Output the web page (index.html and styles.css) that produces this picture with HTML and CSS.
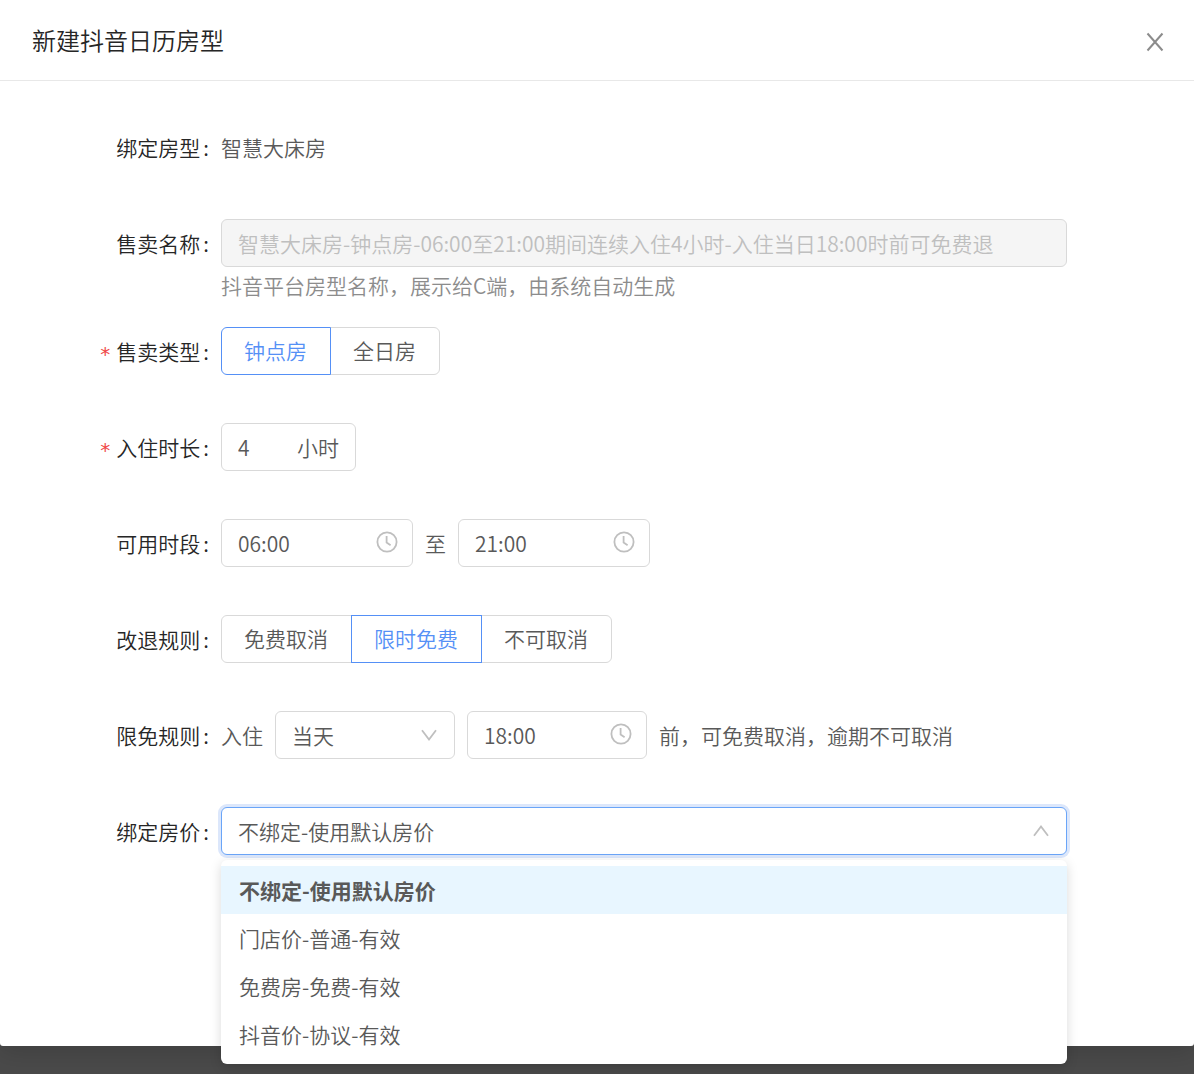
FILE: index.html
```html
<!DOCTYPE html>
<html lang="zh-CN">
<head>
    <meta charset="UTF-8">
    <meta name="viewport" content="width=device-width, initial-scale=1.0">
    <title>新建抖音日历房型</title>
    <link rel="stylesheet" href="styles.css">
</head>
<body>
    <svg class="sprite" width="0" height="0" aria-hidden="true">
        <symbol id="clock" viewBox="0 0 22 22">
            <circle cx="11" cy="11" r="9.6" />
            <path d="M10.6 5v6.6l4 2.6" />
        </symbol>
        <symbol id="down" viewBox="0 0 18 18">
            <path d="M2 4.2l7 9.3 7-9.3" />
        </symbol>
        <symbol id="up" viewBox="0 0 18 18">
            <path d="M2 13.8l7-9.3 7 9.3" />
        </symbol>
    </svg>

    <main class="modal">
        <header class="modal-header">
            <h1>新建抖音日历房型</h1>
            <button type="button" class="close" aria-label="关闭">
                <svg viewBox="0 0 18 20"><path d="M1.5 1.5l15 17M16.5 1.5l-15 17" /></svg>
            </button>
        </header>

        <form class="form">
            <div class="row">
                <span class="label">绑定房型</span>
                <div class="field">智慧大床房</div>
            </div>

            <div class="row has-help">
                <label class="label" for="name">售卖名称</label>
                <div class="field">
                    <input class="box" id="name" type="text" value="智慧大床房-钟点房-06:00至21:00期间连续入住4小时-入住当日18:00时前可免费退" disabled>
                </div>
                <p class="help">抖音平台房型名称，展示给C端，由系统自动生成</p>
            </div>

            <div class="row">
                <span class="label required" id="type-label">售卖类型</span>
                <div class="field">
                    <div class="radios" role="radiogroup" aria-labelledby="type-label">
                        <label><input type="radio" name="type" checked>钟点房</label>
                        <label><input type="radio" name="type">全日房</label>
                    </div>
                </div>
            </div>

            <div class="row">
                <label class="label required" for="hours">入住时长</label>
                <div class="field">
                    <div class="box hours">
                        <input id="hours" type="text" value="4">
                        <span>小时</span>
                    </div>
                </div>
            </div>

            <div class="row">
                <label class="label" for="start">可用时段</label>
                <div class="field">
                    <div class="box time">
                        <input id="start" type="text" value="06:00">
                        <svg class="clock"><use href="#clock" /></svg>
                    </div>
                    <span>至</span>
                    <div class="box time">
                        <input type="text" value="21:00" aria-label="结束时间">
                        <svg class="clock"><use href="#clock" /></svg>
                    </div>
                </div>
            </div>

            <div class="row">
                <span class="label" id="rule-label">改退规则</span>
                <div class="field">
                    <div class="radios" role="radiogroup" aria-labelledby="rule-label">
                        <label><input type="radio" name="rule">免费取消</label>
                        <label><input type="radio" name="rule" checked>限时免费</label>
                        <label><input type="radio" name="rule">不可取消</label>
                    </div>
                </div>
            </div>

            <div class="row">
                <label class="label" for="day">限免规则</label>
                <div class="field">
                    <span>入住</span>
                    <div class="select day">
                        <select class="box" id="day">
                            <option>当天</option>
                        </select>
                        <svg class="arrow"><use href="#down" /></svg>
                    </div>
                    <div class="box time short">
                        <input type="text" value="18:00" aria-label="截止时间">
                        <svg class="clock"><use href="#clock" /></svg>
                    </div>
                    <span>前，可免费取消，逾期不可取消</span>
                </div>
            </div>

            <div class="row">
                <label class="label" for="price">绑定房价</label>
                <div class="field">
                    <div class="select open">
                        <select class="box" id="price">
                            <option>不绑定-使用默认房价</option>
                            <option>门店价-普通-有效</option>
                            <option>免费房-免费-有效</option>
                            <option>抖音价-协议-有效</option>
                        </select>
                        <svg class="arrow"><use href="#up" /></svg>
                        <ul class="menu" role="listbox" aria-label="绑定房价">
                            <li role="option" aria-selected="true">不绑定-使用默认房价</li>
                            <li role="option">门店价-普通-有效</li>
                            <li role="option">免费房-免费-有效</li>
                            <li role="option">抖音价-协议-有效</li>
                        </ul>
                    </div>
                </div>
            </div>
        </form>
    </main>
</body>
</html>
```

FILE: styles.css
```css
* {
    box-sizing: border-box;
}
body {
    margin: 0;
    min-height: 100vh;
    background: #4a4a4a;
    color: #595959;
    font-family: "Noto Sans CJK SC", sans-serif;
    font-size: 21px;
    font-weight: 350;
    line-height: 32px;
}
input, select, button {
    font: inherit;
    color: inherit;
}
svg {
    fill: none;
    stroke: #bfbfbf;
    stroke-width: 1.8;
}
.sprite {
    position: absolute;
}
.modal {
    background: #fff;
    border-radius: 0 0 3px 3px;
    box-shadow: 0 6px 24px rgba(0, 0, 0, 0.15);
}
.modal-header {
    display: flex;
    align-items: center;
    justify-content: space-between;
    height: 81px;
    padding: 0 30px 0 32px;
    border-bottom: 1px solid #e8e8e8;
}
h1 {
    margin: 0;
    color: #262626;
    font-size: 24px;
    font-weight: 350;
}
.close {
    display: flex;
    padding: 4px 0 0;
    border: 0;
    background: none;
    cursor: pointer;
}
.close svg {
    width: 18px;
    height: 20px;
    stroke: #8c8c8c;
    stroke-width: 2;
}

/* form rows */
.form {
    padding: 42px 127px 191px 0;
}
.row {
    display: grid;
    grid-template-columns: 221px minmax(0, 1fr);
    align-items: center;
    margin-bottom: 48px;
}
.row:last-child {
    margin-bottom: 0;
}
.has-help {
    margin-bottom: 21px;
}
.label {
    display: flex;
    align-items: center;
    justify-content: flex-end;
    padding-right: 12px;
    color: #262626;
}
.label::after {
    content: ":";
    margin-left: 3px;
}
.required::before {
    content: "*";
    margin-right: 5px;
    color: #f04848;
    font-family: "DejaVu Sans Mono", monospace;
    font-size: 20px;
    line-height: 24px;
    padding-top: 6px;
}
.field {
    display: flex;
    align-items: center;
    gap: 12px;
    height: 48px;
}
.help {
    grid-column: 2;
    margin: 0;
    padding-top: 2px;
    height: 39px;
    color: #8c8c8c;
}

/* inputs */
.box {
    width: 100%;
    height: 48px;
    padding: 0 16px;
    border: 1px solid #d9d9d9;
    border-radius: 6px;
    background: #fff;
}
.box:disabled {
    background: #f5f5f5;
    color: #bfbfbf;
    opacity: 1;
}
.hours, .time {
    display: flex;
    align-items: center;
    justify-content: space-between;
    width: 192px;
}
.time {
    padding-right: 14px;
}
.hours {
    width: 135px;
}
.short {
    width: 180px;
}
.box input {
    flex: 1;
    min-width: 0;
    padding: 0;
    border: 0;
    outline: 0;
    background: none;
}
.clock {
    width: 22px;
    height: 22px;
    margin-bottom: 2px;
}

/* radio buttons */
.radios {
    display: flex;
}
.radios label {
    position: relative;
    height: 48px;
    padding: 6px 23px 8px 22px;
    border: 1px solid #d9d9d9;
    cursor: pointer;
}
.radios label + label {
    margin-left: -1px;
}
.radios label:first-child {
    border-radius: 6px 0 0 6px;
}
.radios label:last-child {
    border-radius: 0 6px 6px 0;
}
.radios input {
    position: absolute;
    margin: 0;
    opacity: 0;
}
.radios label:has(:checked) {
    z-index: 1;
    border-color: #5590f6;
    color: #5590f6;
}

/* selects */
.select {
    position: relative;
    display: grid;
    align-items: center;
    width: 100%;
}
.day {
    width: 180px;
}
.select select {
    grid-area: 1 / 1;
    appearance: none;
    outline: 0;
}
.arrow {
    grid-area: 1 / 1;
    justify-self: end;
    width: 18px;
    height: 18px;
    margin-right: 17px;
    pointer-events: none;
}
.open select {
    border-color: #6aa5f8;
    box-shadow: 0 0 0 3px #dce7fb;
}
.menu {
    position: absolute;
    top: calc(100% + 5px);
    left: 0;
    right: 0;
    margin: 0;
    padding: 6px 0;
    border-radius: 6px;
    background: #fff;
    box-shadow: 0 3px 12px rgba(0, 0, 0, 0.15);
    list-style: none;
}
.menu li {
    height: 48px;
    padding: 8px 18px;
    cursor: pointer;
}
.menu [aria-selected="true"] {
    background: #e8f6ff;
    font-weight: 700;
}
```
